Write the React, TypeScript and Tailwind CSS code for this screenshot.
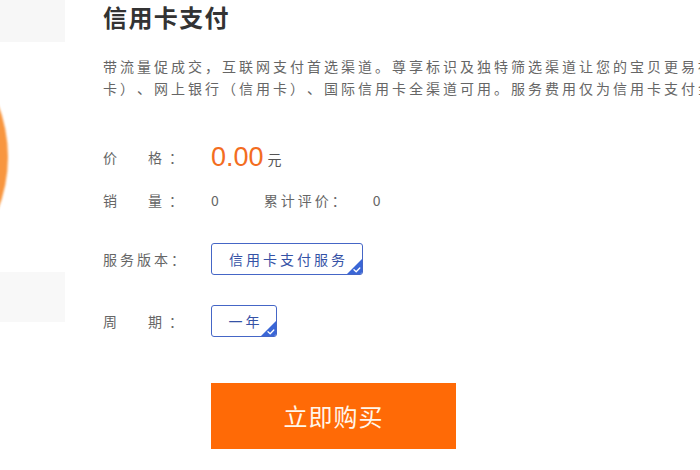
import React from "react";

const cjk = { fontFamily: '"Noto Sans CJK SC", "Noto Sans", sans-serif' };

function Check() {
  return (
    <svg viewBox="0 0 15 15" className="absolute right-0 bottom-0 w-[15px] h-[15px]">
      <path d="M15 0 L15 15 L0 15 Z" fill="#3a66d6" />
      <path d="M7 10.8 L9.2 12.8 L12.8 9" stroke="#fff" strokeWidth="1.3" fill="none" strokeLinecap="round" strokeLinejoin="round" />
    </svg>
  );
}

function Option({ children, w }: { children: React.ReactNode; w: string }) {
  return (
    <div
      className={`relative ${w} h-[32px] flex items-center justify-center border border-[#4566c6] rounded-[3px] text-[14px] tracking-[3px] text-[#3552a6] overflow-hidden`}
    >
      <span className="pl-[3px]">{children}</span>
      <Check />
    </div>
  );
}

export default function App() {
  return (
    <div
      className="w-[700px] h-[470px] bg-white overflow-hidden flex [text-spacing-trim:space-all]"
      style={cjk}
    >
      {/* left column */}
      <div className="w-[65px] shrink-0 flex flex-col overflow-hidden">
        <div className="h-[42px] bg-[#f7f7f7]" />
        <div className="h-[230px] relative overflow-hidden">
          <div className="absolute left-[-282px] top-[-30px] w-[290px] h-[290px] rounded-full bg-[#f8963f] blur-[1px]" />
        </div>
        <div className="h-[50px] bg-[#f8f8f8]" />
      </div>

      {/* main column */}
      <div className="ml-[38px] flex-1 overflow-hidden flex flex-col">
        <h1 className="h-[34px] leading-[34px] text-[24px] tracking-[1.4px] font-bold text-[#333] whitespace-nowrap">
          信用卡支付
        </h1>

        <div className="mt-[21px] text-[14px] leading-[22px] tracking-[3px] text-[#666] whitespace-nowrap">
          <div>带流量促成交，互联网支付首选渠道。尊享标识及独特筛选渠道让您的宝贝更易被发现，支持快捷支付（信用</div>
          <div>卡）、网上银行（信用卡）、国际信用卡全渠道可用。服务费用仅为信用卡支付金额的1%</div>
        </div>

        <div className="mt-[41px] h-[34px] flex items-center text-[14px] tracking-[3px] text-[#666]">
          <div className="w-[108px] shrink-0">
            <span>价</span>
            <span className="ml-[28px]">格</span>
            <span className="ml-[4px]">：</span>
          </div>
          <span
            className="text-[27px] tracking-normal text-[#f36d1f] leading-none"
            style={{ fontFamily: '"Liberation Sans", Arial, sans-serif' }}
          >
            0.00
          </span>
          <span className="ml-[4px] mt-[4px] text-[#555]">元</span>
        </div>

        <div className="mt-[14px] h-[24px] flex items-center text-[14px] tracking-[3px] text-[#666]">
          <div className="w-[108px] shrink-0">
            <span>销</span>
            <span className="ml-[28px]">量</span>
            <span className="ml-[4px]">：</span>
          </div>
          <span>0</span>
          <span className="ml-[42px]">累计评价：</span>
          <span className="ml-[24px]">0</span>
        </div>

        <div className="mt-[31px] flex items-center text-[14px] tracking-[3px] text-[#666]">
          <div className="w-[108px] shrink-0">服务版本：</div>
          <Option w="w-[152px]">信用卡支付服务</Option>
        </div>

        <div className="mt-[30px] flex items-center text-[14px] tracking-[3px] text-[#666]">
          <div className="w-[108px] shrink-0">
            <span>周</span>
            <span className="ml-[28px]">期</span>
            <span className="ml-[4px]">：</span>
          </div>
          <Option w="w-[66px]">一年</Option>
        </div>

        <div className="mt-[46px] ml-[108px]">
          <button className="w-[245px] h-[66px] bg-[#ff6a06] text-[#fff6ea] text-[24px] tracking-[1px] flex items-center justify-center">
            立即购买
          </button>
        </div>
      </div>
    </div>
  );
}
